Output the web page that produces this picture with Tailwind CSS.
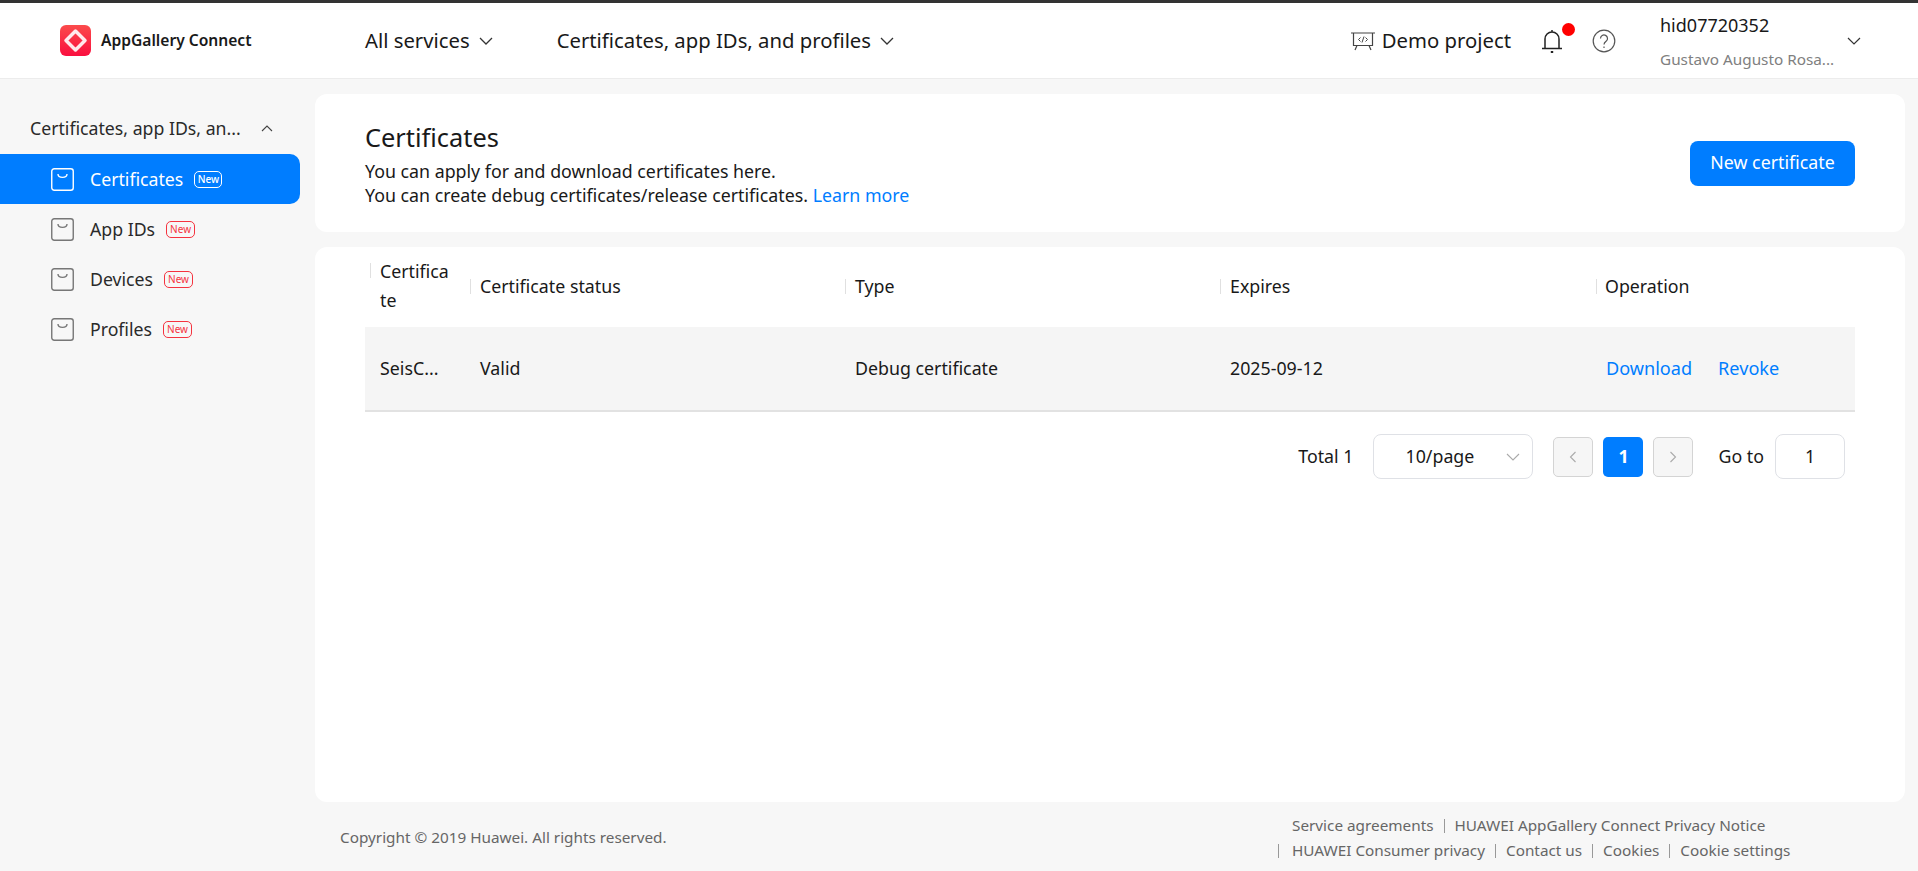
<!DOCTYPE html>
<html lang="en">

<head>
    <meta charset="UTF-8">
    <meta name="viewport" content="width=device-width, initial-scale=1.0">
    <title>AppGallery Connect - Certificates</title>
    <script src="https://cdn.jsdelivr.net/npm/@tailwindcss/browser@4"></script>
</head>

<body class="font-['Noto_Sans','Open_Sans',sans-serif] text-[#191919]">
    <div class="flex h-[871px] flex-col overflow-hidden bg-[#f7f7f7]">
        <!-- header -->
        <header class="flex h-[79px] shrink-0 items-center border-t-[3px] border-b border-t-[#333333] border-b-[#ececec] bg-white">
            <div class="flex w-[365px] shrink-0 items-center pl-[60px]">
                <svg class="h-[31px] w-[31px]" viewBox="0 0 31 31">
                    <defs>
                        <linearGradient id="logoBg" x1="0" y1="0" x2="0" y2="1">
                            <stop offset="0" stop-color="#fb4b4b" />
                            <stop offset="1" stop-color="#fa0f3f" />
                        </linearGradient>
                    </defs>
                    <rect width="31" height="31" rx="6" fill="url(#logoBg)" />
                    <path d="M15.5 6 25 15.500 15.500 25 6 15.500Z" fill="none" stroke="#fff" stroke-opacity=".9" stroke-width="3.500" stroke-linejoin="round" />
                </svg>
                <span class="ml-[10px] text-[15.6px] font-semibold">AppGallery Connect</span>
            </div>
            <div class="flex items-center text-[20.3px]">
                All services
                <svg class="ml-2 h-[10px] w-[16px]" viewBox="0 0 16 10" fill="none" stroke="#333" stroke-width="1.300"><path d="m2 2 6 6 6-6" /></svg>
            </div>
            <div class="ml-[63px] flex items-center text-[20.3px]">
                Certificates, app IDs, and profiles
                <svg class="ml-2 h-[10px] w-[16px]" viewBox="0 0 16 10" fill="none" stroke="#333" stroke-width="1.300"><path d="m2 2 6 6 6-6" /></svg>
            </div>
            <div class="ml-auto flex items-center">
                <svg class="h-[22px] w-[26px]" viewBox="0 0 26 22" fill="none" stroke="#444" stroke-width="1.200">
                    <path d="M1 3h24M3.500 3v12.500h19V3M7 15.500 5 20M19 15.500l2 4.500" />
                    <path d="m10.500 7.500-2 2 2 2M15.500 7.500l2 2-2 2M14 6.500l-2 6" stroke-width="1" />
                </svg>
                <span class="ml-[6px] text-[20.3px]">Demo project</span>
                <div class="relative ml-[30px] h-[26px] w-[22px]">
                    <svg class="h-[26px] w-[22px]" viewBox="0 0 22 26" fill="none" stroke="#222" stroke-width="1.500">
                        <path d="M1 20.500h20M4 20.500V11a7 7 0 0 1 14 0v9.500M11 2v2" />
                        <path d="M9.800 24h2.400" stroke-width="2" />
                    </svg>
                    <span class="absolute -right-[12px] -top-[5px] h-[13px] w-[13px] rounded-full bg-[#ff0000]"></span>
                </div>
                <svg class="ml-[29px] h-[24px] w-[24px]" viewBox="0 0 24 24" fill="none" stroke="#555" stroke-width="1.200">
                    <circle cx="12" cy="12" r="10.800" />
                    <path d="M8.500 9.500a3.500 3.500 0 1 1 5.600 2.800c-1.300 1-2.100 1.600-2.100 3.200" />
                    <path d="M12 17.500v1.500" />
                </svg>
                <div class="ml-[44px] mt-[-1px] w-[189px]">
                    <div class="text-[18px] leading-[26px]">hid07720352</div>
                    <div class="mt-[11px] truncate text-[15.300px] leading-[20px] text-[#808080]">Gustavo Augusto Rosa...</div>
                </div>
                <svg class="mr-[56px] ml-[-3px] h-[10px] w-[16px]" viewBox="0 0 16 10" fill="none" stroke="#333" stroke-width="1.200"><path d="m2 2 6 6 6-6" /></svg>
            </div>
        </header>

        <div class="flex min-h-0 flex-1">
            <!-- sidebar -->
            <aside class="w-[315px] shrink-0 pt-[24px] pr-[15px]">
                <div class="flex h-[51px] items-center pl-[30px] text-[17.700px] text-[#2a2a2a]">
                    <span>Certificates, app IDs, an...</span>
                    <svg class="ml-[19px] h-[10px] w-[14px]" viewBox="0 0 14 10" fill="none" stroke="#444" stroke-width="1.100"><path d="m2 7 5-5 5 5" /></svg>
                </div>
                <div class="flex h-[50px] items-center rounded-r-[10px] bg-[#007dff] pl-[51px] text-[17.700px] text-white">
                    <svg class="h-[23px] w-[23px]" viewBox="0 0 23 23" fill="none" stroke="#fff"><rect x=".75" y=".75" width="21.500" height="21.500" rx="2.500" stroke-width="1.400" /><path d="M7 6c0 4.500 9 4.500 9 0" stroke-width="1.400" /></svg>
                    <span class="ml-[16px]">Certificates</span>
                    <span class="ml-[11px] flex h-[17px] w-[28px] items-center justify-center rounded-[5px] border border-white text-[10px] font-medium">New</span>
                </div>
                <div class="flex h-[50px] items-center pl-[51px] text-[17.700px] text-[#2a2a2a]">
                    <svg class="h-[23px] w-[23px]" viewBox="0 0 23 23" fill="none" stroke="#777"><rect x=".75" y=".75" width="21.500" height="21.500" rx="2.500" stroke-width="1.400" /><path d="M7 6c0 4.500 9 4.500 9 0" stroke-width="1.400" /></svg>
                    <span class="ml-[16px]">App IDs</span>
                    <span class="ml-[11px] flex h-[17px] w-[29px] items-center justify-center rounded-[5px] border border-[#f5333f] text-[10px] text-[#f5333f]">New</span>
                </div>
                <div class="flex h-[50px] items-center pl-[51px] text-[17.700px] text-[#2a2a2a]">
                    <svg class="h-[23px] w-[23px]" viewBox="0 0 23 23" fill="none" stroke="#777"><rect x=".75" y=".75" width="21.500" height="21.500" rx="2.500" stroke-width="1.400" /><path d="M7 6c0 4.500 9 4.500 9 0" stroke-width="1.400" /></svg>
                    <span class="ml-[16px]">Devices</span>
                    <span class="ml-[11px] flex h-[17px] w-[29px] items-center justify-center rounded-[5px] border border-[#f5333f] text-[10px] text-[#f5333f]">New</span>
                </div>
                <div class="flex h-[50px] items-center pl-[51px] text-[17.700px] text-[#2a2a2a]">
                    <svg class="h-[23px] w-[23px]" viewBox="0 0 23 23" fill="none" stroke="#777"><rect x=".75" y=".75" width="21.500" height="21.500" rx="2.500" stroke-width="1.400" /><path d="M7 6c0 4.500 9 4.500 9 0" stroke-width="1.400" /></svg>
                    <span class="ml-[16px]">Profiles</span>
                    <span class="ml-[11px] flex h-[17px] w-[29px] items-center justify-center rounded-[5px] border border-[#f5333f] text-[10px] text-[#f5333f]">New</span>
                </div>
            </aside>

            <!-- main -->
            <main class="flex w-[1590px] shrink-0 flex-col pt-[15px]">
                <section class="flex h-[138px] items-center justify-between rounded-[12px] bg-white px-[50px]">
                    <div class="self-start pt-[27px]">
                        <h1 class="text-[25.400px] leading-[32px]">Certificates</h1>
                        <p class="mt-[6px] text-[17.800px] leading-[24px]">You can apply for and download certificates here.</p>
                        <p class="text-[17.800px] leading-[24px]">You can create debug certificates/release certificates. <a class="text-[#007dff]">Learn more</a></p>
                    </div>
                    <button class="h-[45px] w-[165px] rounded-[8px] bg-[#007dff] pb-[2px] text-[17.800px] text-white">New certificate</button>
                </section>

                <section class="mt-[15px] h-[555px] rounded-[12px] bg-white pr-[50px] pl-[50px] pt-[3px]">
                    <div class="grid h-[72px] grid-cols-[105px_375px_375px_376px_1fr] items-center text-[17.800px]">
                        <div class="relative pl-[15px] leading-[29px]">
                            <span class="absolute top-[6px] left-[5px] h-[15px] w-px bg-[#e0e0e0]"></span>Certifica<br>te
                        </div>
                        <div><div class="border-l border-[#e0e0e0] pl-[9px] leading-[15px]">Certificate status</div></div>
                        <div><div class="border-l border-[#e0e0e0] pl-[9px] leading-[15px]">Type</div></div>
                        <div><div class="border-l border-[#e0e0e0] pl-[9px] leading-[15px]">Expires</div></div>
                        <div><div class="border-l border-[#e0e0e0] pl-[8px] leading-[15px]">Operation</div></div>
                    </div>
                    <div class="mt-[5px] grid h-[85px] grid-cols-[105px_375px_375px_376px_1fr] items-center border-b-2 border-[#e2e2e2] bg-[#f5f5f5] text-[17.800px]">
                        <div class="pl-[15px]">SeisC...</div>
                        <div class="pl-[10px]">Valid</div>
                        <div class="pl-[10px]">Debug certificate</div>
                        <div class="pl-[10px]">2025-09-12</div>
                        <div class="flex gap-[26px] pl-[10px] text-[18.100px] text-[#007dff]">
                            <a>Download</a>
                            <a>Revoke</a>
                        </div>
                    </div>
                    <div class="mt-[22px] flex items-center justify-end pr-[10px] text-[17.800px]">
                        <span>Total 1</span>
                        <div class="ml-[20px] flex h-[45px] w-[160px] items-center rounded-[8px] border border-[#dfe1e6] pr-[12px] pl-[31px]">
                            <span>10/page</span>
                            <svg class="ml-auto h-[8px] w-[14px]" viewBox="0 0 14 8" fill="none" stroke="#aaa" stroke-width="1.100"><path d="m1 1 6 6 6-6" /></svg>
                        </div>
                        <button class="ml-[20px] flex h-[40px] w-[40px] items-center justify-center rounded-[5px] border border-[#d4d4d4] bg-[#f6f6f6]">
                            <svg class="h-[12px] w-[8px]" viewBox="0 0 8 12" fill="none" stroke="#aaa" stroke-width="1.100"><path d="M6.500 1 1.500 6l5 5" /></svg>
                        </button>
                        <button class="ml-[10px] h-[40px] w-[40px] rounded-[5px] bg-[#007dff] font-bold text-white">1</button>
                        <button class="ml-[10px] flex h-[40px] w-[40px] items-center justify-center rounded-[5px] border border-[#d4d4d4] bg-[#f6f6f6]">
                            <svg class="h-[12px] w-[8px]" viewBox="0 0 8 12" fill="none" stroke="#aaa" stroke-width="1.100"><path d="m1.500 1 5 5-5 5" /></svg>
                        </button>
                        <span class="ml-[25px]">Go to</span>
                        <div class="ml-[11px] flex h-[45px] w-[70px] items-center justify-center rounded-[8px] border border-[#dfe1e6]">1</div>
                    </div>
                </section>

                <footer class="flex flex-1 items-center text-[15.300px] text-[#666666]">
                    <span class="mt-[2px] ml-[25px]">Copyright © 2019 Huawei. All rights reserved.</span>
                    <div class="mt-[3px] ml-auto flex w-[627px] flex-col items-start leading-[25px]">
                        <div class="flex items-center pl-[14px]">
                            <a>Service agreements</a><span class="mx-[10px] h-[14px] w-px bg-[#999]"></span><a>HUAWEI AppGallery Connect Privacy Notice</a>
                        </div>
                        <div class="flex items-center">
                            <span class="mr-[13px] h-[14px] w-px bg-[#999]"></span><a>HUAWEI Consumer privacy</a><span class="mx-[10px] h-[14px] w-px bg-[#999]"></span><a>Contact us</a><span class="mx-[10px] h-[14px] w-px bg-[#999]"></span><a>Cookies</a><span class="mx-[10px] h-[14px] w-px bg-[#999]"></span><a>Cookie settings</a>
                        </div>
                    </div>
                </footer>
            </main>
        </div>
    </div>
</body>

</html>
